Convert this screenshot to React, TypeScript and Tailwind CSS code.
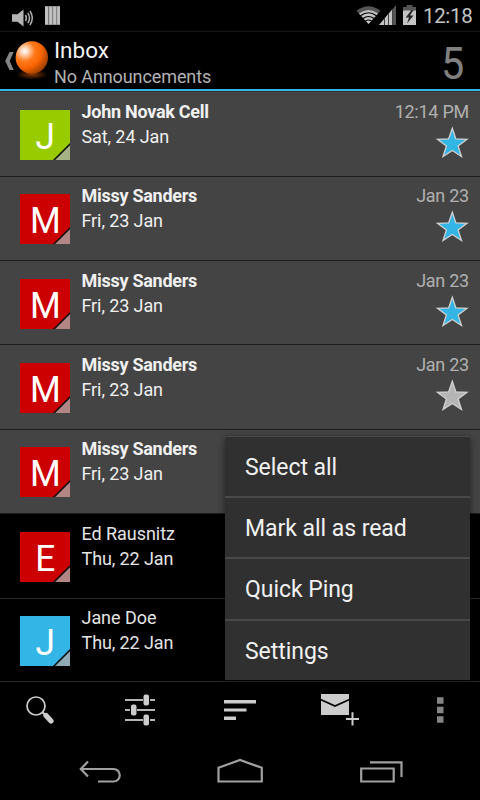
import React from "react";

type Message = {
  name: string;
  date: string;
  letter: string;
  color: string;
  corner: string;
  unread?: boolean;
  time?: string;
  star?: "on" | "off";
};

const messages: Message[] = [
  { name: "John Novak Cell", date: "Sat, 24 Jan", letter: "J", color: "#99cc00", corner: "#a5b384", unread: true, time: "12:14 PM", star: "on" },
  { name: "Missy Sanders", date: "Fri, 23 Jan", letter: "M", color: "#cc0000", corner: "#b38686", unread: true, time: "Jan 23", star: "on" },
  { name: "Missy Sanders", date: "Fri, 23 Jan", letter: "M", color: "#cc0000", corner: "#b38686", unread: true, time: "Jan 23", star: "on" },
  { name: "Missy Sanders", date: "Fri, 23 Jan", letter: "M", color: "#cc0000", corner: "#b38686", unread: true, time: "Jan 23", star: "off" },
  { name: "Missy Sanders", date: "Fri, 23 Jan", letter: "M", color: "#cc0000", corner: "#b38686", unread: true },
  { name: "Ed Rausnitz", date: "Thu, 22 Jan", letter: "E", color: "#cc0000", corner: "#b38686" },
  { name: "Jane Doe", date: "Thu, 22 Jan", letter: "J", color: "#33b5e5", corner: "#90aab5" },
];

function StatusBar() {
  return (
    <div className="flex h-8 items-start justify-between border-b border-[#151515] pl-3 pr-[7px]">
      <svg width="50" height="31" viewBox="12 0 50 31">
        <path d="M12 14.300h5.500l6-4.800v17l-6-4.800H12z" fill="#b4b4b4" />
        <g fill="none" stroke="#b0b0b0" strokeWidth="1.500">
          <path d="M25.500 15q1.800 3 0 6M27.800 12.800q3.400 5.200 0 10.400M30 11q4.600 7 0 14" />
        </g>
        <path d="M45 6h15v19H45z" fill="#777" />
        <path d="M45 6.500h3v18h-3zM49.200 6.500h3v18h-3zM53.200 6.500h3v18h-3zM57.200 6.500h2.800v18h-2.800z" fill="#c0c0c0" />
      </svg>
      <div className="flex">
        <svg width="68" height="31" viewBox="354 0 68 31">
          <path d="M355.500 10.800Q367.500 1.500 379.500 10.800L367.500 24z" fill="#555" />
          <path d="M358 13.500Q367.500 6.500 377 13.500L367.500 24z" fill="#c4c4c4" />
          <g fill="none" stroke="#000" strokeWidth="1.200">
            <path d="M359.500 15.800Q367.500 9.700 375.500 15.800M362 18.500Q367.500 14.500 373 18.500M364.500 21Q367.500 19 370.500 21" />
          </g>
          <path d="M395 5v20h-17z" fill="#555" />
          <path d="M391 9.700V25h-13z" fill="#c4c4c4" />
          <path d="M383.500 18v7M387.500 14v11M391.500 9v16" stroke="#444" strokeWidth="1" />
          <path d="M405.500 5h6v2h3.500v4h-13V7h3.500z" fill="#555" />
          <path d="M402 10.500h13V25h-13z" fill="#c4c4c4" />
          <path d="M410.500 10l-5.800 7.500h3.300l-2 6 6.500-8H409l3.500-5.500z" fill="#252525" />
        </svg>
        <span className="mt-[4px] w-[50px] whitespace-nowrap text-[20.500px] leading-6 tracking-[-0.350px] text-[#c4c4c4]">12:18</span>
      </div>
    </div>
  );
}

function Header() {
  return (
    <header className="flex h-[59px] shrink-0 border-b-2 border-[#33b5e5] pr-[16px]">
      <svg width="54" height="57" viewBox="0 32 54 57">
        <defs>
          <radialGradient id="ball" cx=".28" cy=".3" r=".75">
            <stop offset="0" stopColor="#fff" />
            <stop offset=".12" stopColor="#ffdfc8" />
            <stop offset=".42" stopColor="#ff7a1c" />
            <stop offset=".7" stopColor="#f96400" />
            <stop offset="1" stopColor="#a94400" />
          </radialGradient>
          <radialGradient id="glow">
            <stop offset="0" stopColor="#8a3700" />
            <stop offset="1" stopColor="#000" />
          </radialGradient>
        </defs>
        <path d="M9.500 52h4.200l-4 9 4 9H9.500l-4.300-9z" fill="#858585" />
        <ellipse cx="32" cy="74.500" rx="16" ry="5" fill="url(#glow)" />
        <circle cx="31.800" cy="57.500" r="16.200" fill="url(#ball)" />
      </svg>
      <div className="flex flex-1 flex-col whitespace-nowrap pt-[4px]">
        <span className="text-[22.500px] leading-[28px] text-[#f3f3f3]">Inbox</span>
        <span className="mt-px text-[18px] leading-6 tracking-[-0.100px] text-[#b2b2b2]">No Announcements</span>
      </div>
      <span className="origin-right scale-x-[.92] pt-[5px] text-[45px] leading-[54px] text-[#808080]">5</span>
    </header>
  );
}

function Star({ kind }: { kind: "on" | "off" }) {
  return (
    <svg className="mt-[2px]" width="34" height="32" viewBox="0 0 34 32">
      <path
        d="M17.300 2.300L20.800 12.800 32 13.300 23.100 20 26.500 30.500 17.300 24.500 8 30.500 11.400 20 2.500 13.300 13.700 12.800z"
        fill={kind === "on" ? "#33b5e5" : "#b5b5b5"}
        stroke="#d0d0d0"
        strokeWidth="1.300"
      />
    </svg>
  );
}

function Row({ m }: { m: Message }) {
  return (
    <li className={`flex h-[84.400px] shrink-0 border-b pl-5 pr-[11px] ${m.unread ? "border-[#1d1d1d] bg-[#444444]" : "border-[#2a2a2a] bg-black"}`}>
      <svg className="mt-[17.600px] shrink-0" width="50" height="50" viewBox="0 0 50 50">
        <path d="M0 0h50v50H0z" fill={m.color} />
        <path d="M34 50L50 34v16z" fill={m.corner} />
        <path d="M33.500 50.500l17-17" stroke="#111" strokeWidth="1.600" />
        <text x="25" y="39" textAnchor="middle" fontSize="37.500" fill="#fff" transform="translate(1.800 0) scale(.94 1)">{m.letter}</text>
      </svg>
      <div className={`ml-[11.500px] flex flex-1 flex-col whitespace-nowrap pt-[6.500px] text-[18px] leading-[25px] ${m.unread ? "text-[#f0f0f0]" : "text-[#e4e4e4]"}`}>
        <span className={m.unread ? "font-bold tracking-[-0.270px]" : "tracking-[-0.050px]"}>{m.name}</span>
        <span className="tracking-[-0.100px]">{m.date}</span>
      </div>
      {m.time && (
        <div className="flex flex-col items-end whitespace-nowrap pt-[6.500px] text-[18px] leading-[25px] text-[#b0b0b0]">
          <span className="tracking-[-0.250px]">{m.time}</span>
          <Star kind={m.star ?? "off"} />
        </div>
      )}
    </li>
  );
}

function Menu() {
  return (
    <div className="absolute left-[225px] top-[436px] flex h-[244px] w-[245px] flex-col overflow-hidden rounded-t-[2px] border-t border-[#484848] bg-[#303030] text-[23px] tracking-[-0.050px] text-[#f1f1f1] shadow-[0_2px_7px_rgba(0,0,0,0.5)]">
      {["Select all", "Mark all as read", "Quick Ping", "Settings"].map((label, i) => (
        <div key={label} className={`flex h-[61.200px] shrink-0 items-center pl-5 pt-[2.500px] ${i < 3 ? "border-b-2 border-[#484848]" : ""}`}>
          {label}
        </div>
      ))}
    </div>
  );
}

function ActionBar() {
  return (
    <svg width="480" height="59" viewBox="0 682 480 59" fill="#ccc">
      <circle cx="36" cy="706" r="9" fill="none" stroke="#ccc" strokeWidth="1.700" />
      <path d="M42.300 712l3 3" stroke="#ccc" strokeWidth="2" />
      <path d="M46 715.500l5 5.500" stroke="#ccc" strokeWidth="5.200" strokeLinecap="round" />
      <path d="M125 699h18v2h-18zM150 699h5v2h-5zM125 709h5v2h-5zM137 709h18v2h-18zM125 719h18v2h-18zM150 719h5v2h-5z" fill="#b5b5b5" />
      <rect x="143.500" y="694.500" width="5.500" height="11" rx="2" />
      <rect x="131" y="704.500" width="5.500" height="11" rx="2" />
      <rect x="143.500" y="714.500" width="5.500" height="11" rx="2" />
      <path d="M224 700h32v3.500h-32zM224 708.500h22.500v3H224zM224 716.500h12v3.500h-12z" />
      <path d="M321 694h28v21h-28z" />
      <path d="M320.500 699.500l14.500 6.500 14.500-6.500" fill="none" stroke="#000" strokeWidth="1.700" />
      <path d="M346 718h13v2h-13zM351.500 712.300h2v13.200h-2z" />
      <path d="M437 697.300h6.500v6.500H437zM437 706.800h6.500v6.500H437zM437 716.300h6.500v6.500H437z" fill="#858585" />
    </svg>
  );
}

function NavBar() {
  return (
    <svg width="480" height="59" viewBox="0 741 480 59" fill="none" stroke="#a0a0a0" strokeWidth="2.200">
      <path d="M81 769h32.500a6.200 6.200 0 0 1 0 12.500H98M88 761.500l-7.200 7.500 7.200 7.500" />
      <path d="M218.500 781.500v-13.700L240 760l21.800 7.800v13.700z" />
      <path d="M361.200 768.500h32.500v13h-32.500zM370 762.300h31.500V777" />
    </svg>
  );
}

export default function App() {
  return (
    <main className="relative flex h-[800px] w-[480px] flex-col overflow-hidden bg-black font-['Roboto',sans-serif]">
      <StatusBar />
      <Header />
      <ul className="flex h-[591px] shrink-0 flex-col overflow-hidden border-b border-t border-b-[#2c2c2c] border-t-[#333] bg-[#444]">
        <li aria-hidden="true" className="h-[0.300px] shrink-0" />
        {messages.map((m, i) => (
          <Row key={i} m={m} />
        ))}
      </ul>
      <ActionBar />
      <NavBar />
      <Menu />
    </main>
  );
}
